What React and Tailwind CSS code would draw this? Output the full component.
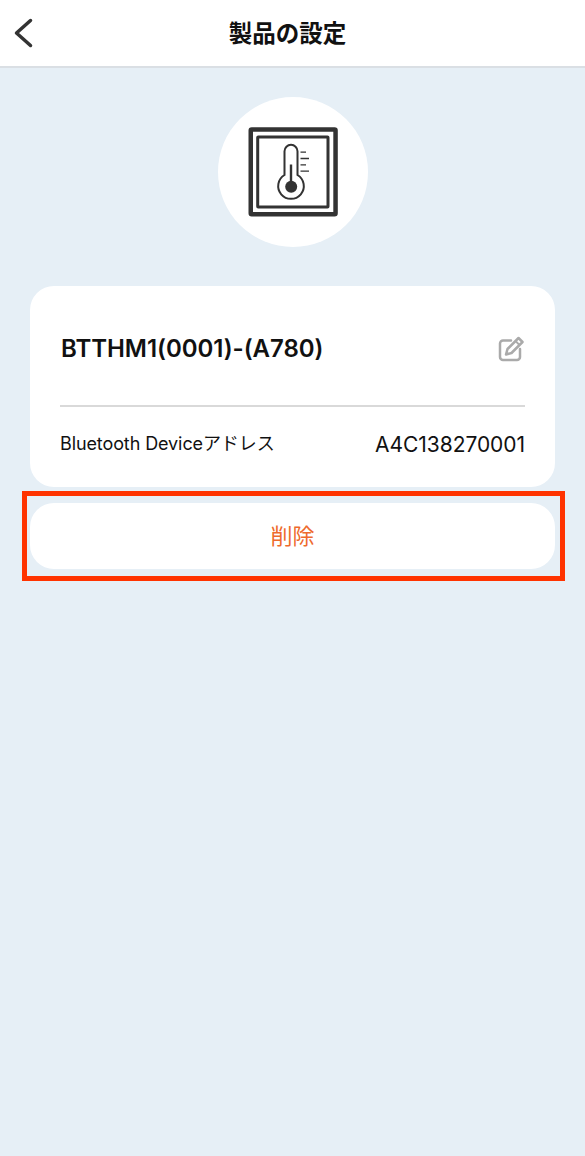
import React from "react";

const font = { fontFamily: '"Inter", "Noto Sans CJK JP", sans-serif' };

function Thermo() {
  return (
    <svg width="92" height="92" viewBox="0 0 92 92" fill="none" className="block">
      <rect x="3.750" y="3.450" width="84.800" height="84.800" rx="1" stroke="#333" strokeWidth="4.500" />
      <rect x="10.700" y="11" width="70.300" height="70" rx="0.500" stroke="#333" strokeWidth="3" />
      <path d="M37.500 49V25.300a6.500 6.500 0 0 1 13 0V49a12.800 12.800 0 1 1-13 0Z" stroke="#333" strokeWidth="2" />
      <path d="M44 38.500V60" stroke="#333" strokeWidth="2.400" />
      <circle cx="44.200" cy="60.800" r="6" fill="#333" />
      <path d="M53.500 26.200H59M53.500 32.500H62M53.500 38.800H59M53.500 45.200H62" stroke="#333" strokeWidth="1.300" />
    </svg>
  );
}

function EditIcon() {
  return (
    <svg width="27" height="26" viewBox="0 0 27 26" fill="none" className="block">
      <path d="M13 4.500H5A3 3 0 0 0 2 7.500V21a3 3 0 0 0 3 3h14a3 3 0 0 0 3-3v-8" stroke="#aaa" strokeWidth="2.500" strokeLinecap="round" />
      <path d="M8 18.500l1.500-5.500L20.500 2l4 4L13.500 17l-5.500 1.500Z" stroke="#aaa" strokeWidth="2.500" strokeLinejoin="round" />
      <path d="M17.500 5l4 4" stroke="#aaa" strokeWidth="1.800" />
    </svg>
  );
}

export default function App() {
  return (
    <div className="relative w-[585px] h-[1156px] bg-[#e6eff6] flex flex-col items-center overflow-hidden" style={font}>
      <header className="relative w-full h-[68px] bg-white border-b-2 border-[#dadfe4] flex items-center justify-center pr-[10px] pt-[2px]">
        <svg width="20" height="32" viewBox="0 0 20 32" fill="none" className="absolute left-[13px] top-[17px]">
          <path d="M17.500 3.500L3.500 16L17.500 28.500" stroke="#333" strokeWidth="3.500" strokeLinecap="round" strokeLinejoin="round" />
        </svg>
        <h1 className="text-[23.500px] leading-none font-bold text-[#111]">製品の設定</h1>
      </header>

      <div className="mt-[29px] w-[150px] h-[150px] rounded-full bg-white flex items-center justify-center">
        <Thermo />
      </div>

      <section className="mt-[39px] w-[525px] h-[201px] rounded-[24px] bg-white px-[30px] flex flex-col">
        <div className="h-[121px] flex items-center justify-between border-b-2 border-[#d9d9d9] pt-[6px]">
          <span className="text-[24px] font-semibold text-[#111] leading-none pl-[1px] tracking-[-0.05px]">BTTHM1(0001)-(A780)</span>
          <EditIcon />
        </div>
        <div className="flex items-center justify-between h-[74px]">
          <span className="text-[18px] text-[#111] leading-none tracking-[-0.1px]">Bluetooth Deviceアドレス</span>
          <span className="text-[21px] text-[#111] leading-none tracking-[-0.05px]">A4C138270001</span>
        </div>
      </section>

      <button className="mt-[16px] w-[525px] h-[66px] rounded-[24px] bg-white text-[#ee6a2c] text-[22px] flex items-center justify-center">
        削除
      </button>

      <div className="absolute left-[22px] top-[491px] w-[543px] h-[90px] border-[5px] border-[#ff3300]" />
    </div>
  );
}
